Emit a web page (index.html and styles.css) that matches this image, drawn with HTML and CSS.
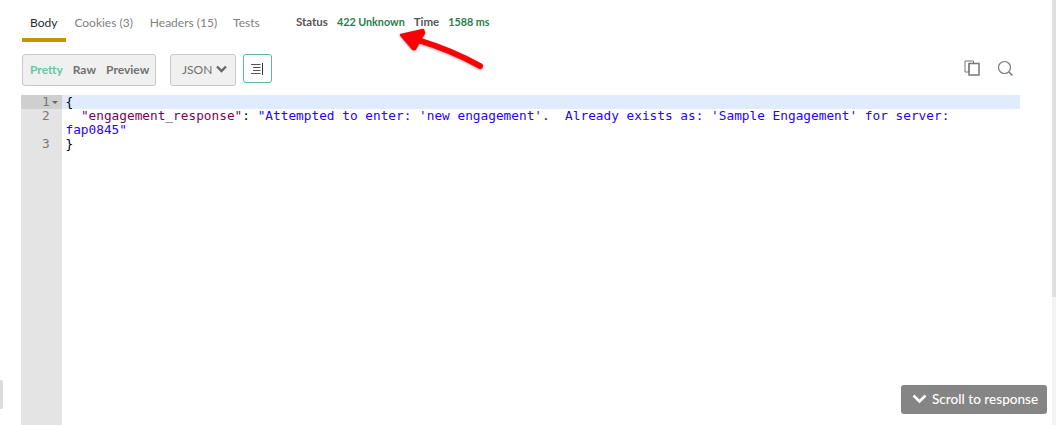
FILE: index.html
```html
<!DOCTYPE html>
<html lang="en">
<head>
<meta charset="utf-8">
<title>Response</title>
<link rel="stylesheet" href="styles.css">
</head>
<body>
<main class="pane">
  <header class="top">
    <nav class="tabs">
      <span class="tab tab-active">Body</span>
      <span class="tab">Cookies (3)</span>
      <span class="tab">Headers (15)</span>
      <span class="tab">Tests</span>
    </nav>
    <div class="meta">
      <span class="meta-label">Status</span>
      <span class="meta-value">422 Unknown</span>
      <span class="meta-label">Time</span>
      <span class="meta-value">1588 ms</span>
    </div>
  </header>
  <div class="toolbar">
    <div class="modes">
      <span class="mode mode-active">Pretty</span>
      <span class="mode">Raw</span>
      <span class="mode">Preview</span>
    </div>
    <div class="format">JSON
      <svg class="chev" viewBox="0 0 11 8" width="11" height="8"><path d="M1 1.500 5.500 6 10 1.500" fill="none" stroke="#666" stroke-width="2.400"/></svg>
    </div>
    <div class="wrap-btn">
      <svg viewBox="0 0 13 12" width="13" height="12"><path d="M0 1.500H9.500M2 4.500H9.500M2 7.500H9.500M0 10.500H9.500" fill="none" stroke="#555" stroke-width="1.200"/><path d="M11.500 0V12" fill="none" stroke="#333" stroke-width="1"/></svg>
    </div>
    <div class="actions">
      <svg viewBox="0 0 16 16" width="16" height="16"><path d="M1 1H9.500V3.500H5V12H1Z" fill="none" stroke="#777" stroke-width="1"/><rect x="5" y="3.500" width="10" height="11.500" fill="none" stroke="#777" stroke-width="1.500"/></svg>
      <svg viewBox="0 0 17 17" width="17" height="17"><circle cx="7.500" cy="7.500" r="6" fill="none" stroke="#777" stroke-width="1.200"/><path d="M12 12 15.500 15.500" stroke="#777" stroke-width="1.500"/></svg>
    </div>
  </div>
  <div class="editor">
    <div class="gutter">
      <div class="num num-active">1<span class="fold"></span></div>
      <div class="num num-tall">2</div>
      <div class="num">3</div>
    </div>
    <div class="code">
      <div class="line line-active">{</div>
      <div class="line line-wrap">  <span class="key">"engagement_response"</span>: <span class="str">"Attempted to enter: 'new engagement'.  Already exists as: 'Sample Engagement' for server: </span><span class="str">fap0845"</span></div>
      <div class="line">}</div>
    </div>
  </div>
</main>
<div class="scrollbar"></div>
<div class="side-handle"></div>
<button class="scroll-btn" type="button">
  <svg viewBox="0 0 15 10" width="15" height="10"><path d="M1.500 1.500 7.500 7.500 13.500 1.500" fill="none" stroke="#fff" stroke-width="2.600"/></svg>
  Scroll to response
</button>
<svg class="arrow" viewBox="0 0 90 60" width="90" height="60">
  <path d="M82 38C66 29 46 20 20 12" fill="none" stroke="#fb0007" stroke-width="6" stroke-linecap="round"/>
  <path d="M3 7 25 2 26 5 17 21 15 21Z" fill="#fb0007" stroke="#fb0007" stroke-width="2.500" stroke-linejoin="round"/>
</svg>
</body>
</html>
```
FILE: styles.css
```css
html, body {
  margin: 0;
  height: 100%;
  overflow: hidden;
  background: #fff;
  font-family: Lato, "Open Sans", sans-serif;
}
.pane {
  display: flex;
  flex-direction: column;
  height: 425px;
  padding: 0 36px 0 21px;
  box-sizing: border-box;
}
.top {
  display: flex;
  align-items: flex-start;
  height: 54px;
  margin-left: 1px;
}
.tabs {
  display: flex;
  width: 274px;
  box-sizing: border-box;
}
.tab {
  font-size: 12px;
  line-height: 15px;
  color: #808080;
  padding: 15px 7px 8px 8px;
  border-bottom: 4px solid transparent;
}
.tab + .tab + .tab {
  padding-left: 10px;
  padding-right: 6px;
}
.tab-active {
  color: #282828;
  border-bottom-color: #c69400;
  padding-right: 9px;
}
.meta {
  display: flex;
  gap: 9px;
  padding-top: 14px;
  line-height: 15px;
}
.meta-label {
  font-size: 11.500px;
  font-weight: 700;
  color: #555;
}
.meta-value {
  font-size: 10.750px;
  font-weight: 700;
  color: #2a7d4b;
}
.toolbar {
  display: flex;
  align-items: flex-start;
  height: 41px;
  margin-left: 1px;
}
.modes {
  display: flex;
  align-items: center;
  gap: 10px;
  width: 134px;
  height: 32px;
  padding: 0 0 2px 7px;
  box-sizing: border-box;
  background: #f0f0f0;
  border: 1px solid #c8c8c8;
  border-radius: 3px;
}
.mode {
  font-size: 12px;
  font-weight: 700;
  color: #707070;
}
.mode-active {
  color: #6cc3a2;
}
.format {
  display: flex;
  align-items: center;
  gap: 4px;
  margin-left: 14px;
  width: 66px;
  height: 32px;
  padding: 0 0 2px 11px;
  box-sizing: border-box;
  background: #f0f0f0;
  border: 1px solid #c8c8c8;
  border-radius: 3px;
  font-size: 12px;
  color: #707070;
}
.wrap-btn {
  display: flex;
  align-items: center;
  justify-content: center;
  margin-left: 7px;
  width: 29px;
  height: 29px;
  box-sizing: border-box;
  border: 1px solid #5fb89a;
  border-radius: 3px;
}
.actions {
  display: flex;
  gap: 17px;
  margin-left: auto;
  padding: 6px 6px 0 0;
}
.editor {
  flex: 1;
  display: flex;
  min-height: 0;
  font-family: "DejaVu Sans Mono", "Liberation Mono", monospace;
  font-size: 12.780px;
  line-height: 14px;
}
.gutter {
  width: 41px;
  flex: none;
  background: #e4e4e4;
  color: #777;
}
.num {
  padding-left: 21px;
  height: 14px;
  position: relative;
}
.num-active {
  background: #cfcfcf;
}
.num-tall {
  height: 28px;
}
.fold {
  position: absolute;
  left: 31px;
  top: 6px;
  border: 3px solid transparent;
  border-top-color: #666;
  border-bottom: 0;
}
.code {
  flex: 1;
  min-width: 0;
}
.line {
  padding-left: 3.500px;
  color: #000;
  white-space: pre-wrap;
}
.line-wrap {
  padding-right: 20px;
}
.line-active {
  background: #e0ecfd;
}
.key {
  color: #7f0055;
}
.str {
  color: #2a00ff;
}
.scrollbar {
  position: fixed;
  top: 0;
  right: 0;
  bottom: 0;
  width: 4px;
  background: linear-gradient(#dedede 297px, #f3f3f3 297px);
}
.side-handle {
  position: fixed;
  left: 0;
  top: 380px;
  width: 3px;
  height: 29px;
  background: #dcdcdc;
  border-radius: 0 2px 2px 0;
}
.scroll-btn {
  position: fixed;
  left: 901px;
  top: 385px;
  display: flex;
  align-items: center;
  gap: 5px;
  width: 146px;
  height: 29px;
  padding: 0 0 2px 11px;
  box-sizing: border-box;
  border: 0;
  border-radius: 3px;
  background: #858585;
  color: #fff;
  font-family: Lato, "Open Sans", sans-serif;
  font-size: 13.600px;
  font-weight: 500;
}
.arrow {
  position: fixed;
  left: 398px;
  top: 28px;
  filter: drop-shadow(0 1px 1px rgba(0, 0, 0, 0.35));
}
```
